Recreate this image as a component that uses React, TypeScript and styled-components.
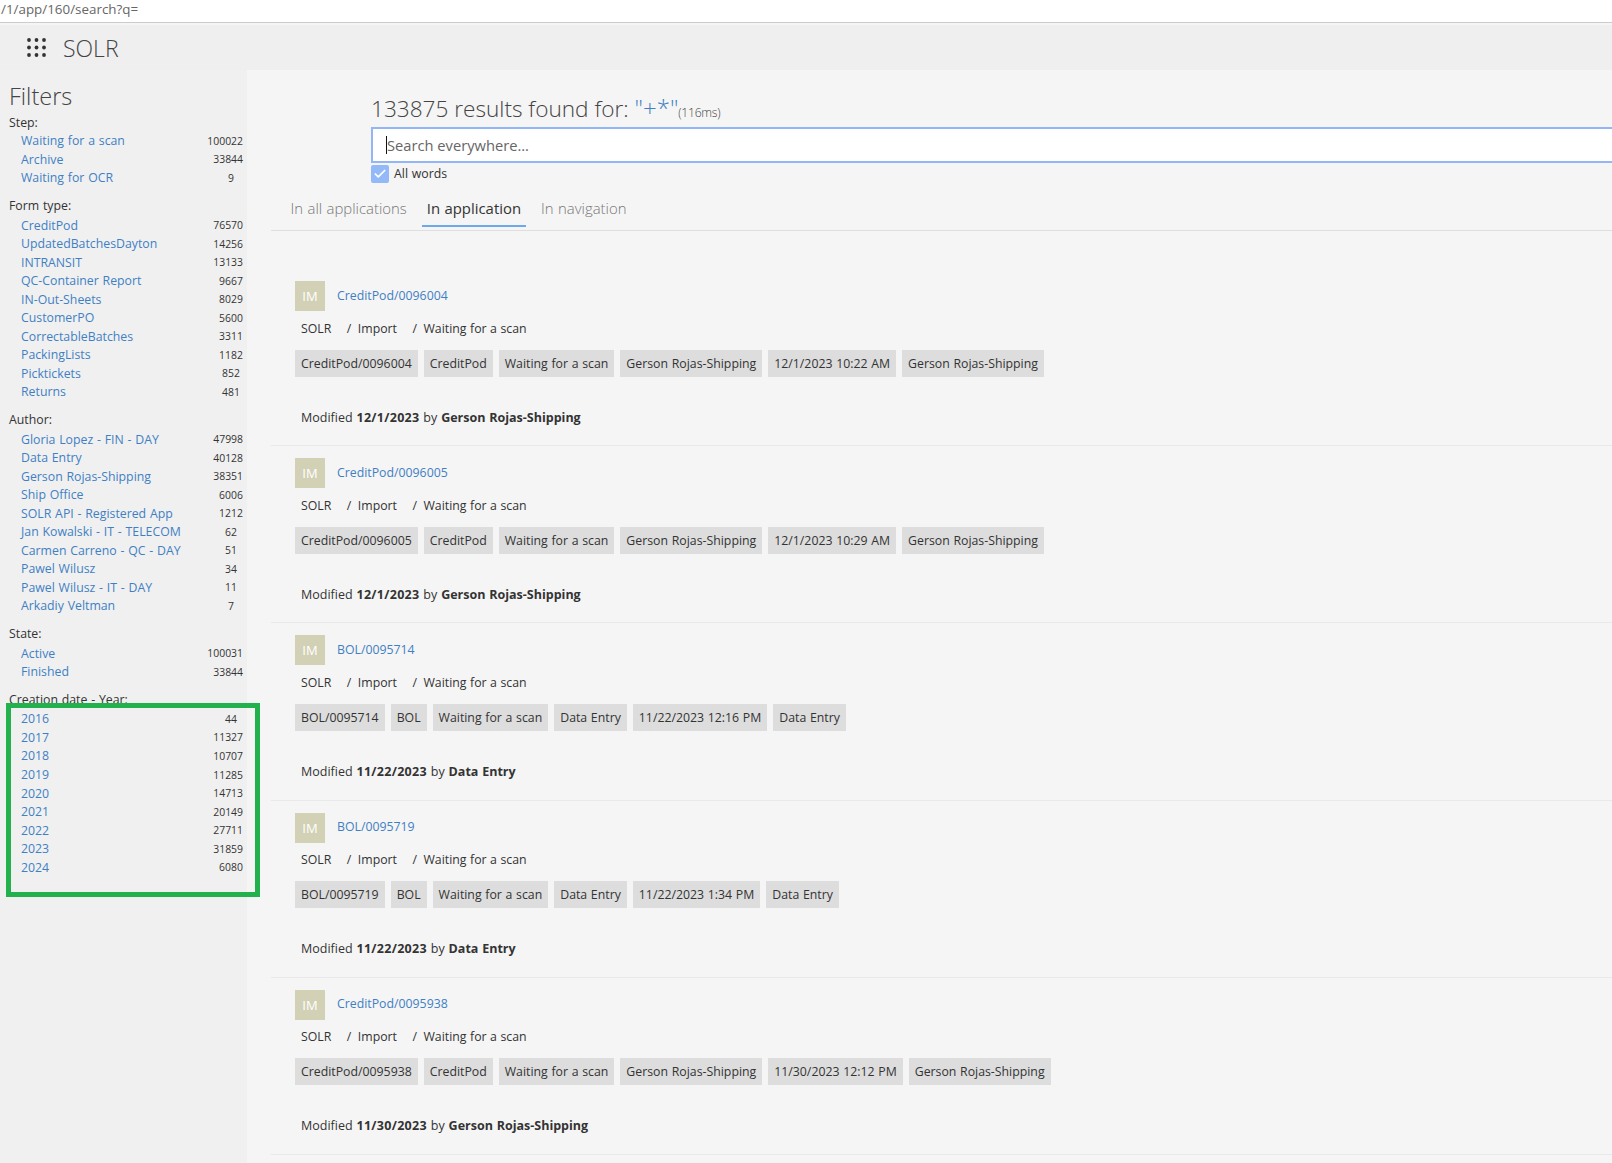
import React from "react";
import styled, {createGlobalStyle} from "styled-components";
import {Check} from "lucide-react";

const GlobalStyle = createGlobalStyle`
  html, body {
    margin: 0;
    padding: 0;
    height: 100%;
    overflow: hidden;
    background: #f5f5f5;
  }

  body {
    font-family: "Open Sans", "Noto Sans", "Liberation Sans", sans-serif;
    font-size: 12.3px;
    word-spacing: 0.6px;
    color: #333333;
  }
`

const Page = styled.div`
  display: flex;
  flex-direction: column;
  height: 1163px;
  overflow: hidden;
`

const UrlBar = styled.div`
  height: 23px;
  flex-shrink: 0;
  box-sizing: border-box;
  background: white;
  border-bottom: 1px solid #cccccc;
  color: #666666;
  font-size: 13.4px;
  line-height: 18px;
  padding-left: 1px;
  margin-bottom: 2px;
  white-space: nowrap;
`

const Header = styled.div`
  height: 45px;
  flex-shrink: 0;
  background: #efefef;
  display: flex;
  align-items: center;
  padding-left: 27px;
  gap: 17px;
`

const AppTitle = styled.span`
  font-size: 23px;
  font-weight: 300;
  color: #444444;
`

const Body = styled.div`
  flex: 1;
  display: flex;
  min-height: 0;
`

const Sidebar = styled.aside`
  position: relative;
  width: 247px;
  flex-shrink: 0;
  box-sizing: border-box;
  background: #f0f0f0;
  padding: 9px 4px 0 9px;
`

const FiltersTitle = styled.h2`
  margin: 0;
  font-size: 23.5px;
  line-height: 35px;
  font-weight: 300;
  color: #444444;
`

const GroupLabel = styled.div`
  height: 19.1px;
  line-height: 18px;
  color: #333333;
`

const FilterGroup = styled.div`
  margin-bottom: 9.7px;

  &:first-of-type ${GroupLabel} {
    height: 17.7px;
  }
`

const FilterRow = styled.div`
  display: flex;
  align-items: center;
  justify-content: space-between;
  height: 18.52px;
  padding-left: 12px;
`

const FilterLink = styled.a`
  color: #3f80c4;
  white-space: nowrap;
`

const ResultLink = styled(FilterLink)`
  margin-bottom: 2px;
`

const Count = styled.span`
  min-width: 24px;
  text-align: center;
  font-size: 10.4px;
  line-height: 18px;
  color: #333333;
  white-space: nowrap;
  direction: rtl;
`

const Highlight = styled.div`
  position: absolute;
  left: 6px;
  top: 633px;
  width: 254px;
  height: 194px;
  box-sizing: border-box;
  border: 5px solid #22b14c;
  pointer-events: none;
`

const Main = styled.main`
  flex: 1;
  min-width: 0;
  overflow: hidden;
  padding: 20px 0 0 24px;
`

const SearchArea = styled.div`
  padding-left: 100px;
`

const ResultsHeading = styled.h1`
  margin: 0;
  font-size: 22.6px;
  line-height: 37px;
  font-weight: 300;
  word-spacing: 0;
  color: #444444;
  white-space: nowrap;
`

const Query = styled.span`
  color: #3f80c4;
  font-size: 24px;
  line-height: 1;
`

const Timing = styled.small`
  font-size: 12.2px;
  line-height: 1;
  font-weight: 300;
  letter-spacing: -0.3px;
`

const SearchBox = styled.div`
  position: relative;
  width: calc(100% + 10px);
`

const SearchInput = styled.input`
  display: block;
  width: 100%;
  height: 36px;
  box-sizing: border-box;
  padding: 0 0 0 14px;
  background: white;
  border: 2px solid #92b6f6;
  outline: none;
  font-family: inherit;
  font-size: 14.7px;
  color: #555555;

  &::placeholder {
    color: #666666;
    opacity: 1;
  }
`

const Caret = styled.span`
  position: absolute;
  left: 15px;
  top: 9px;
  width: 1px;
  height: 18px;
  background: #111111;
`

const CheckRow = styled.label`
  display: flex;
  align-items: center;
  gap: 5px;
  height: 19px;
  margin-top: 1px;
`

const CheckBox = styled.span`
  width: 18px;
  height: 18px;
  display: flex;
  align-items: center;
  justify-content: center;
  border-radius: 2px;
  background: #93b9f8;
  color: white;
`

const Tabs = styled.div`
  display: flex;
  margin: 6px 0 38px;
  height: 42px;
  box-sizing: border-box;
  border-bottom: 1px solid #dedede;
  gap: 10px;
  padding-left: 14.5px;
`

const Tab = styled.a<{ $active?: boolean }>`
  height: 38px;
  box-sizing: border-box;
  padding: 0 5px;
  line-height: 38px;
  font-size: 14.9px;
  font-weight: ${p => p.$active ? 400 : 300};
  color: ${p => p.$active ? '#333333' : '#777777'};
  border-bottom: 2px solid ${p => p.$active ? '#6eaaea' : 'transparent'};
`

const Result = styled.div`
  height: 177.2px;
  box-sizing: border-box;
  border-bottom: 1px solid #e9e9e9;
  padding: 12px 0 0 24px;
`

const TitleRow = styled.div`
  display: flex;
  align-items: center;
  gap: 12px;
  height: 30px;
`

const Avatar = styled.span`
  width: 30px;
  height: 30px;
  display: flex;
  align-items: center;
  justify-content: center;
  background: #d2d0b5;
  color: white;
  font-size: 13px;
`

const Crumbs = styled.div`
  display: flex;
  height: 18px;
  line-height: 18px;
  margin-top: 8.5px;
  padding-left: 6px;
  word-spacing: 0.3px;
  white-space: pre;
`

const Separator = styled.span`
  margin: 0 6.5px 0 15.5px;
`

const Tags = styled.div`
  display: flex;
  gap: 6px;
  margin-top: 12px;
`

const Tag = styled.span`
  height: 27px;
  line-height: 27px;
  padding: 0 6px;
  background: #dddddd;
  word-spacing: 0.5px;
  white-space: nowrap;
`

const Modified = styled.div`
  margin-top: 31px;
  padding-left: 6px;
  font-size: 12.5px;
  line-height: 20px;
`

const ModifiedDate = styled.b`
  letter-spacing: 0.3px;
`

type Item = { name: string, count: number }
type Group = { label: string, items: Item[] }

const filterGroups: Group[] = [
    {
        label: 'Step:', items: [
            {name: 'Waiting for a scan', count: 100022},
            {name: 'Archive', count: 33844},
            {name: 'Waiting for OCR', count: 9},
        ]
    },
    {
        label: 'Form type:', items: [
            {name: 'CreditPod', count: 76570},
            {name: 'UpdatedBatchesDayton', count: 14256},
            {name: 'INTRANSIT', count: 13133},
            {name: 'QC-Container Report', count: 9667},
            {name: 'IN-Out-Sheets', count: 8029},
            {name: 'CustomerPO', count: 5600},
            {name: 'CorrectableBatches', count: 3311},
            {name: 'PackingLists', count: 1182},
            {name: 'Picktickets', count: 852},
            {name: 'Returns', count: 481},
        ]
    },
    {
        label: 'Author:', items: [
            {name: 'Gloria Lopez - FIN - DAY', count: 47998},
            {name: 'Data Entry', count: 40128},
            {name: 'Gerson Rojas-Shipping', count: 38351},
            {name: 'Ship Office', count: 6006},
            {name: 'SOLR API - Registered App', count: 1212},
            {name: 'Jan Kowalski - IT - TELECOM', count: 62},
            {name: 'Carmen Carreno - QC - DAY', count: 51},
            {name: 'Pawel Wilusz', count: 34},
            {name: 'Pawel Wilusz - IT - DAY', count: 11},
            {name: 'Arkadiy Veltman', count: 7},
        ]
    },
    {
        label: 'State:', items: [
            {name: 'Active', count: 100031},
            {name: 'Finished', count: 33844},
        ]
    },
    {
        label: 'Creation date - Year:', items: [
            {name: '2016', count: 44},
            {name: '2017', count: 11327},
            {name: '2018', count: 10707},
            {name: '2019', count: 11285},
            {name: '2020', count: 14713},
            {name: '2021', count: 20149},
            {name: '2022', count: 27711},
            {name: '2023', count: 31859},
            {name: '2024', count: 6080},
        ]
    },
]

const results = [
    {id: 'CreditPod/0096004', type: 'CreditPod', time: '12/1/2023 10:22 AM', date: '12/1/2023', author: 'Gerson Rojas-Shipping'},
    {id: 'CreditPod/0096005', type: 'CreditPod', time: '12/1/2023 10:29 AM', date: '12/1/2023', author: 'Gerson Rojas-Shipping'},
    {id: 'BOL/0095714', type: 'BOL', time: '11/22/2023 12:16 PM', date: '11/22/2023', author: 'Data Entry'},
    {id: 'BOL/0095719', type: 'BOL', time: '11/22/2023 1:34 PM', date: '11/22/2023', author: 'Data Entry'},
    {id: 'CreditPod/0095938', type: 'CreditPod', time: '11/30/2023 12:12 PM', date: '11/30/2023', author: 'Gerson Rojas-Shipping'},
]

const dots = [0, 1, 2].flatMap(y => [0, 1, 2].map(x => [x, y]))

function App() {
    return (
        <Page>
            <GlobalStyle/>
            <UrlBar>/1/app/160/search?q=</UrlBar>
            <Header>
                <svg width="19" height="19" viewBox="0 0 19 19" fill="#333333">
                    {dots.map(([x, y]) => <circle key={`${x}-${y}`} cx={2 + x * 7.5} cy={2 + y * 7.5} r="1.9"/>)}
                </svg>
                <AppTitle>SOLR</AppTitle>
            </Header>
            <Body>
                <Sidebar>
                    <FiltersTitle>Filters</FiltersTitle>
                    {filterGroups.map(group => (
                        <FilterGroup key={group.label}>
                            <GroupLabel>{group.label}</GroupLabel>
                            {group.items.map(item => (
                                <FilterRow key={item.name}>
                                    <FilterLink>{item.name}</FilterLink>
                                    <Count>{item.count}</Count>
                                </FilterRow>
                            ))}
                        </FilterGroup>
                    ))}
                    <Highlight/>
                </Sidebar>
                <Main>
                    <SearchArea>
                        <ResultsHeading>
                            133875 results found for: <Query>"+*"</Query><Timing>(116ms)</Timing>
                        </ResultsHeading>
                        <SearchBox>
                            <SearchInput placeholder="Search everywhere..."/>
                            <Caret/>
                        </SearchBox>
                        <CheckRow>
                            <CheckBox><Check size={14} strokeWidth={3}/></CheckBox>
                            All words
                        </CheckRow>
                    </SearchArea>
                    <Tabs>
                        <Tab>In all applications</Tab>
                        <Tab $active>In application</Tab>
                        <Tab>In navigation</Tab>
                    </Tabs>
                    {results.map(result => (
                        <Result key={result.id}>
                            <TitleRow>
                                <Avatar>IM</Avatar>
                                <ResultLink>{result.id}</ResultLink>
                            </TitleRow>
                            <Crumbs>
                                SOLR<Separator>/</Separator>Import<Separator>/</Separator>Waiting for a scan
                            </Crumbs>
                            <Tags>
                                <Tag>{result.id}</Tag>
                                <Tag>{result.type}</Tag>
                                <Tag>Waiting for a scan</Tag>
                                <Tag>{result.author}</Tag>
                                <Tag>{result.time}</Tag>
                                <Tag>{result.author}</Tag>
                            </Tags>
                            <Modified>
                                Modified <ModifiedDate>{result.date}</ModifiedDate> by <b>{result.author}</b>
                            </Modified>
                        </Result>
                    ))}
                </Main>
            </Body>
        </Page>
    );
}

export default App
